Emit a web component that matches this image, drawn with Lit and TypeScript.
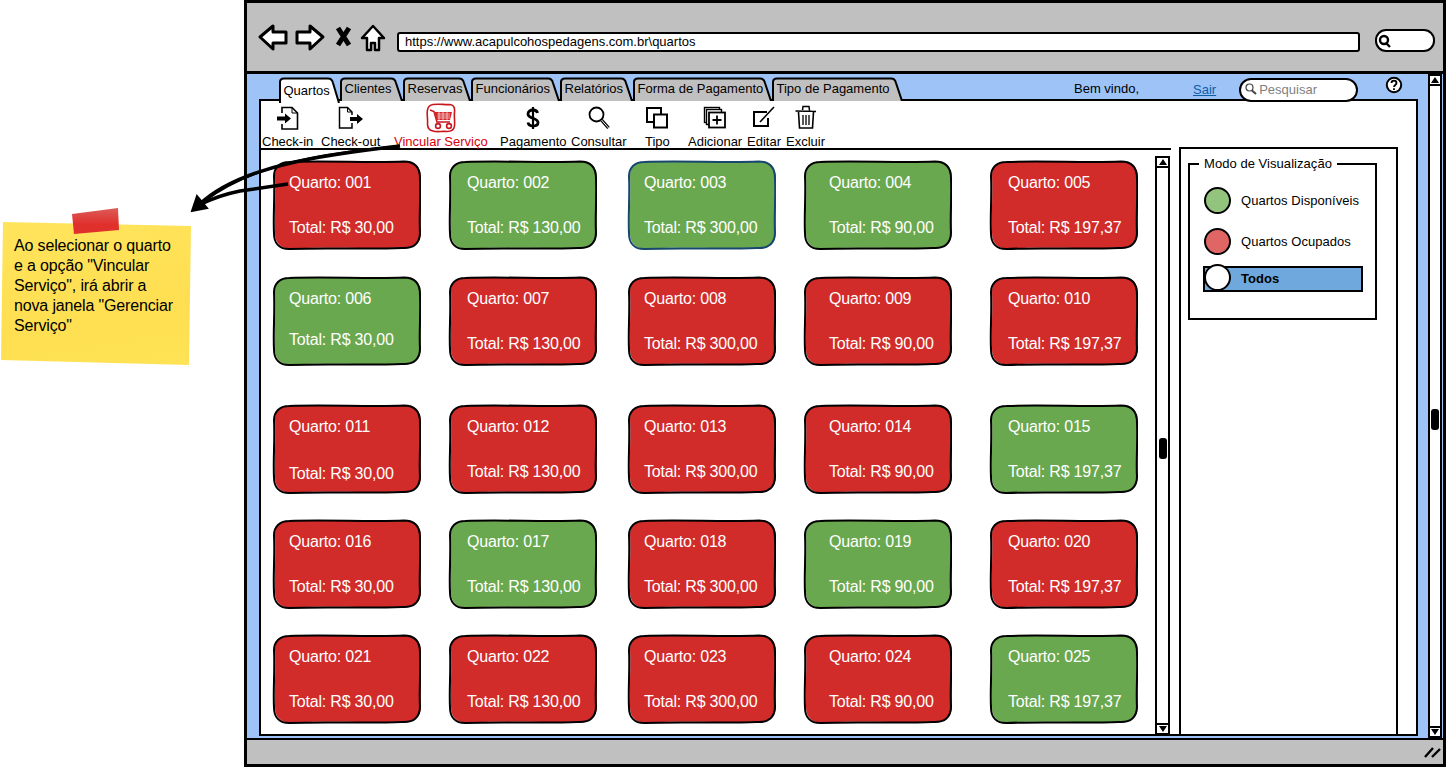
import {LitElement, css, html, svg} from 'lit'
import {customElement} from 'lit/decorators.js'

const URL_TEXT = 'https://www.acapulcohospedagens.com.br\\quartos'

const TABS = [
    {label: 'Quartos', width: 61, active: true},
    {label: 'Clientes', width: 63},
    {label: 'Reservas', width: 68},
    {label: 'Funcionários', width: 89},
    {label: 'Relatórios', width: 73},
    {label: 'Forma de Pagamento', width: 139},
    {label: 'Tipo de Pagamento', width: 131},
]

// sketchy outline of a room card, in a 147x88 box
const CARD_PATH = 'M17 2 C50 0.5 100 3 130 1.5 C141 1.5 146 8 146 18 C147 35 145 55 146 71 C146 81 140 87 128 86 C95 87.5 50 85.5 17 87 C7 87 2 81 2 72 C1 55 3 35 2 16 C2 7 8 2 17 2 Z'

const COLUMNS = [{pad: 16}, {pad: 18}, {pad: 16}, {pad: 25}, {pad: 18}]
const GREEN = [2, 3, 4, 6, 15, 17, 19, 25]
const TOTALS = [30, 130, 300, 90, 197.37]

const formatTotal = (v: number) => 'Total: R$ ' + v.toFixed(2).replace('.', ',')

const ROOMS = Array.from({length: 25}, (_, i) => {
    const n = i + 1
    let shift = 0
    if (n === 6) shift = -4
    if (n === 11) shift = 2
    return {
        n,
        label: 'Quarto: ' + String(n).padStart(3, '0'),
        total: formatTotal(TOTALS[i % 5]),
        green: GREEN.includes(n),
        selected: n === 3,
        pad: COLUMNS[i % 5].pad,
        gap: 27 + shift,
    }
})

const icon = (w: number, h: number, body: unknown) => html`
    <svg width="${w}" height="${h}" viewBox="0 0 ${w} ${h}">${body}</svg>
`

const TOOLS = [
    {label: 'Check-in', icon: icon(24, 24, svg`
        <path d="M6 7 V1.500 H16 L21.500 7 V23 H6 V18" fill="#fff" stroke="#000" stroke-width="1.600"/>
        <path d="M16 1.500 V7 H21.500" fill="none" stroke="#000" stroke-width="1"/>
        <path d="M1 10.500 H9 V7.500 L15 12.500 L9 17.500 V14.500 H1 Z" fill="#000"/>`)},
    {label: 'Check-out', icon: icon(28, 24, svg`
        <path d="M15 9 V6 L10.500 1.500 H2.500 V22 H15 V17" fill="#fff" stroke="#000" stroke-width="1.500"/>
        <path d="M10.500 1.500 V6 H15" fill="none" stroke="#000" stroke-width="1"/>
        <path d="M13 11 H20 V8 L26 13 L20 18 V15 H13 Z" fill="#000"/>`)},
    {label: 'Vincular Serviço', red: true, icon: icon(30, 30, svg`
        <path d="M7 1.500 C13 .5 19 2 24 1.500 C28 2 29 5 28.500 9 C28 14 29 19 28.500 23 C28 27 25 28.500 21 28.500 C15 28 11 29.500 7 28 C3 27.500 1.500 25 1.500 21 C2 15 .5 11 1.500 7 C2 3.500 4 2 7 1.500 Z" fill="#fff" stroke="#c8171c" stroke-width="1.600"/>
        <path d="M4 7 L8 8.500 L11 19 H24" fill="none" stroke="#c8171c" stroke-width="1.600"/>
        <path d="M8 9 H26 L24 17 H10 Z" fill="#d6262a"/>
        <path d="M11.500 11 H24 M11.500 13 H24 M11.500 15 H24 M13 9 V17 M17 9 V17 M21 9 V17" stroke="#fff" stroke-width=".6"/>
        <circle cx="12" cy="23" r="2.400" fill="none" stroke="#c8171c" stroke-width="1.600"/>
        <circle cx="23" cy="23" r="2.400" fill="none" stroke="#c8171c" stroke-width="1.600"/>`)},
    {label: 'Pagamento', icon: icon(16, 26, svg`
        <path d="M12.500 8 C12 5.500 10 5 8 5 C5 5 3 6.500 3 9 C3 14 13 12.500 13 17.500 C13 20 11 21 8 21 C5.500 21 3.500 20 3 17.500" fill="none" stroke="#000" stroke-width="2.800"/>
        <path d="M8 2 V24" stroke="#000" stroke-width="2.200"/>`)},
    {label: 'Consultar', icon: icon(24, 26, svg`
        <circle cx="9.500" cy="9.500" r="7" fill="#fff" stroke="#000" stroke-width="1.800"/>
        <path d="M14.500 15 L21.500 23" stroke="#000" stroke-width="3.400"/>
        <path d="M14.500 15 L21.500 23" stroke="#fff" stroke-width="1"/>`)},
    {label: 'Tipo', icon: icon(24, 24, svg`
        <rect x="2" y="2" width="14" height="14" fill="#fff" stroke="#000" stroke-width="2"/>
        <rect x="9" y="8.500" width="13" height="13" fill="#fff" stroke="#000" stroke-width="2"/>`)},
    {label: 'Adicionar', icon: icon(24, 24, svg`
        <rect x="1.500" y="1.500" width="15" height="15" fill="#fff" stroke="#000" stroke-width="1.400"/>
        <rect x="3.500" y="3.500" width="15" height="15" fill="#fff" stroke="#000" stroke-width="1.400"/>
        <rect x="6" y="6.500" width="16" height="15" fill="#fff" stroke="#000" stroke-width="1.800"/>
        <path d="M14 9.500 V18.500 M9.500 14 H18.500" stroke="#000" stroke-width="1.800"/>`)},
    {label: 'Editar', icon: icon(24, 24, svg`
        <path d="M15 6 H2 V20 H16 V12" fill="none" stroke="#000" stroke-width="2"/>
        <path d="M8 16 L22 1" stroke="#000" stroke-width="1.600"/>`)},
    {label: 'Excluir', icon: icon(24, 26, svg`
        <path d="M1.500 6 L22 6.500 M8.500 5 L9 1.500 H15 L15.500 5.500" fill="none" stroke="#000" stroke-width="1.500"/>
        <path d="M4.500 7 L5.500 23 H18.500 L19.500 7" fill="#fff" stroke="#000" stroke-width="1.600"/>
        <path d="M9 10 V20 M12 10 V20 M15 10 V20" stroke="#000" stroke-width="1.300"/>`)},
]

@customElement('app-root')
export class App_Root extends LitElement
{
    renderTab(tab: {label: string, width: number, active?: boolean})
    {
        const w = tab.width
        const h = tab.active ? 26 : 24
        return html`
            <div class="tab ${tab.active ? 'active' : ''}" style="width: ${w}px">
                <svg class="tab-shape" width="${w}" height="${h}">
                    <path
                        d="M1 ${h} V5 Q1 1.500 5 1.500 H${w - 12} Q${w - 8} 1.500 ${w - 7} 6 L${w - 1} ${h}"
                        fill="${tab.active ? '#fff' : '#c0c0c0'}"
                        stroke="#000"
                        stroke-width="2"
                    />
                </svg>
                <span>${tab.label}</span>
            </div>
        `
    }

    renderScroll(kind: string)
    {
        return html`
            <div class="scroll ${kind}">
                <div class="scroll-btn"><i class="up"></i></div>
                <div class="track"><b></b></div>
                <div class="scroll-btn"><i class="down"></i></div>
            </div>
        `
    }

    renderCard(room: typeof ROOMS[number])
    {
        const fill = room.green ? '#6aa84f' : '#d12b2a'
        const line = room.selected ? '#17466e' : '#000'
        return html`
            <div class="card" style="padding-left: ${room.pad}px">
                <svg class="card-shape" width="149" height="90" viewBox="0 0 147 88" preserveAspectRatio="none">
                    <path d="${CARD_PATH}" fill="${fill}" transform="translate(1 -.5)"/>
                    <path d="${CARD_PATH}" fill="none" stroke="${line}" stroke-width="2"/>
                </svg>
                <span class="card-text">${room.label}</span>
                <span class="card-text" style="margin-top: ${room.gap}px">${room.total}</span>
            </div>
        `
    }

    render()
    {
        return html`
            <div class="page">
                <main class="window">
                    <header class="browser-bar">
                        <svg class="nav" width="135" height="32" viewBox="0 0 135 32">
                            <path d="M2 14 L15 3 V9 H28 V20 H15 V26 Z" fill="#fff" stroke="#000" stroke-width="3" stroke-linejoin="round"/>
                            <path d="M65 14 L52 3 V9 H39 V20 H52 V26 Z" fill="#fff" stroke="#000" stroke-width="3" stroke-linejoin="round"/>
                            <path d="M80 5 L91 22 M91 5 L80 22" stroke="#000" stroke-width="5"/>
                            <path d="M104 15 L115 3 L126 15 H121 V27 H117 V20 H113 V27 H109 V15 Z" fill="#fff" stroke="#000" stroke-width="2.500" stroke-linejoin="round"/>
                        </svg>
                        <div class="url">${URL_TEXT}</div>
                        <div class="browser-search">
                            <svg width="14" height="14" viewBox="0 0 14 14">
                                <circle cx="6" cy="6" r="4" fill="#fff" stroke="#000" stroke-width="2.400"/>
                                <path d="M8 9 L12 13" stroke="#000" stroke-width="2.400"/>
                            </svg>
                        </div>
                    </header>
                    <div class="content">
                        <div class="main">
                            <div class="top-row">
                                <nav class="tabs">${TABS.map((t) => this.renderTab(t))}</nav>
                                <span class="welcome">Bem vindo,</span>
                                <a class="logout">Sair</a>
                                <div class="search">
                                    <svg width="12" height="12" viewBox="0 0 12 12">
                                        <circle cx="4.500" cy="4.500" r="3.500" fill="#fff" stroke="#444" stroke-width="1.200"/>
                                        <path d="M7 7.500 L11 11" stroke="#444" stroke-width="2"/>
                                    </svg>
                                    <span>Pesquisar</span>
                                </div>
                                <svg class="help" width="18" height="18" viewBox="0 0 18 18">
                                    <circle cx="9" cy="9" r="7.200" fill="#fff" stroke="#000" stroke-width="2"/>
                                    <path d="M6.500 7 C6.500 3.800 11.500 3.800 11.500 7 C11.500 9 9 9 9 11" fill="none" stroke="#000" stroke-width="1.800"/>
                                    <path d="M9 12.300 V14" stroke="#000" stroke-width="1.800"/>
                                </svg>
                            </div>
                            <section class="panel">
                                <div class="left">
                                    <div class="tools">
                                        ${TOOLS.map((t) => html`
                                            <div class="tool ${t.red ? 'red' : ''}">
                                                <div class="tool-icon">${t.icon}</div>
                                                <span>${t.label}</span>
                                            </div>
                                        `)}
                                    </div>
                                    <div class="body">
                                        <div class="cards">
                                            ${ROOMS.map((r) => this.renderCard(r))}
                                        </div>
                                        ${this.renderScroll('inner')}
                                    </div>
                                </div>
                                <aside class="side">
                                    <fieldset class="legend-box">
                                        <legend>Modo de Visualização</legend>
                                        <div class="mode">
                                            <i class="dot green"></i><span>Quartos Disponíveis</span>
                                        </div>
                                        <div class="mode">
                                            <i class="dot red"></i><span>Quartos Ocupados</span>
                                        </div>
                                        <div class="mode on">
                                            <i class="dot white"></i><span>Todos</span>
                                        </div>
                                    </fieldset>
                                </aside>
                            </section>
                        </div>
                        ${this.renderScroll('outer')}
                    </div>
                    <footer class="status">
                        <svg width="18" height="14" viewBox="0 0 18 14">
                            <path d="M1 12 L9 3 M8 12 L16 4" stroke="#000" stroke-width="2.400"/>
                        </svg>
                    </footer>
                </main>
            </div>

            <aside class="note">
                Ao selecionar o quarto<br>
                e a opção "Vincular<br>
                Serviço", irá abrir a<br>
                nova janela "Gerenciar<br>
                Serviço"
            </aside>
            <div class="tape"></div>
            <svg class="arrows" width="1447" height="768">
                <path d="M400 146 C330 154 240 165 199 205 C215 197 225 194 240 191 L288 184" fill="none" stroke="#000" stroke-width="3.500"/>
                <path d="M400 146 C330 152 255 163 205 201" fill="none" stroke="#000" stroke-width="2"/>
                <path d="M197 196 L192 211 L207 208 Z" fill="#000" stroke="#000" stroke-width="2"/>
            </svg>
        `
    }

    static styles = css`
        :host
        {
            display: block;
            position: relative;
            width: 1447px;
            height: 768px;
            overflow: hidden;
            background: #fff;
            font-family: "Liberation Sans", Arial, sans-serif;
            color: #000;
        }

        *
        {
            box-sizing: border-box;
        }

        svg
        {
            display: block;
        }

        .page
        {
            padding-left: 244px;
        }

        .window
        {
            width: 1202px;
            height: 767px;
            border: 3px solid #000;
            display: flex;
            flex-direction: column;
            background: #c0c0c0;
        }

        .browser-bar
        {
            height: 71px;
            flex: none;
            border-bottom: 3px solid #000;
            display: flex;
            align-items: flex-start;
            padding: 20px 0 0 11px;
        }

        .nav
        {
            flex: none;
        }

        .url
        {
            width: 963px;
            height: 20px;
            margin: 9px 0 0 4px;
            padding-left: 6px;
            background: #fff;
            border: 2px solid #000;
            border-radius: 3px;
            font-size: 13px;
            line-height: 15px;
            white-space: nowrap;
        }

        .browser-search
        {
            width: 60px;
            height: 23px;
            margin: 6px 0 0 15px;
            background: #fff;
            border: 2px solid #000;
            border-radius: 11px;
            padding: 3px 0 0 1px;
        }

        .content
        {
            flex: 1;
            min-height: 0;
            display: flex;
            background: #9dc3f7;
        }

        .main
        {
            width: 1171px;
            display: flex;
            flex-direction: column;
            padding: 3px 0 0 12px;
            flex: none;
        }

        .top-row
        {
            height: 24px;
            flex: none;
            display: flex;
            position: relative;
            z-index: 1;
            font-size: 13px;
        }

        .tabs
        {
            display: flex;
            margin-left: 20px;
        }

        .tab
        {
            position: relative;
            height: 24px;
            padding: 4px 0 0 4.500px;
            white-space: nowrap;
        }

        .tab span
        {
            position: relative;
        }

        .tab.active
        {
            padding-top: 6px;
        }

        .tab-shape
        {
            position: absolute;
            left: 0;
            top: 0;
        }

        .welcome
        {
            margin: 4px 0 0 171px;
        }

        .logout
        {
            margin: 5px 0 0 54px;
            color: #0b5ea8;
            text-decoration: underline;
        }

        .search
        {
            width: 119px;
            height: 24px;
            margin: 1px 0 0 23px;
            padding: 0 0 2px 4px;
            background: #fff;
            border: 2px solid #000;
            border-radius: 12px;
            display: flex;
            align-items: center;
            gap: 2px;
            color: #7f7f7f;
        }

        .help
        {
            margin: -1px 0 0 27px;
        }

        .panel
        {
            flex: 1;
            min-height: 0;
            margin: -2px 0 2px;
            background: #fff;
            border: 2px solid #000;
            display: flex;
        }

        .left
        {
            width: 910px;
            flex: none;
            display: flex;
            flex-direction: column;
        }

        .tools
        {
            height: 49px;
            flex: none;
            border-bottom: 2px solid #000;
            display: grid;
            grid-template-columns: 59px 73px 106px 71px 74px 43px 59px 39px 41px;
            padding-left: 1px;
        }

        .tool
        {
            justify-self: start;
            display: flex;
            flex-direction: column;
            align-items: center;
            font-size: 13px;
            line-height: 15px;
            white-space: nowrap;
        }

        .tool.red
        {
            color: #d8000c;
        }

        .tool-icon
        {
            height: 33px;
            display: flex;
            align-items: center;
        }

        .body
        {
            flex: 1;
            min-height: 0;
            display: flex;
        }

        .cards
        {
            width: 894px;
            flex: none;
            padding: 11px 0 0 12px;
            display: grid;
            grid-template-columns: 176px 179px 176px 186px 147px;
            grid-template-rows: 116px 128px 115px 115px 88px;
        }

        .card
        {
            position: relative;
            width: 147px;
            height: 88px;
            padding-top: 13px;
            display: flex;
            flex-direction: column;
            align-items: flex-start;
            color: #fff;
        }

        .card-shape
        {
            position: absolute;
            left: -1px;
            top: -1px;
        }

        .card-text
        {
            position: relative;
            font-size: 16px;
            letter-spacing: -.2px;
            line-height: 18px;
            white-space: nowrap;
        }

        .scroll
        {
            width: 15px;
            flex: none;
            background: #fff;
            border: 2px solid #000;
            border-width: 0 2px;
            display: flex;
            flex-direction: column;
        }

        .scroll.inner
        {
            margin-top: 6px;
            margin-bottom: -1px;
        }

        .scroll.inner .track
        {
            padding-top: 5px;
        }

        .scroll.outer
        {
            margin-left: 10px;
            width: 14px;
        }

        .scroll-btn
        {
            height: 12px;
            flex: none;
            border: 1px solid #000;
            border-width: 2px 0;
            display: flex;
            align-items: center;
            justify-content: center;
        }

        .scroll-btn i
        {
            width: 0;
            height: 0;
            border: 4px solid transparent;
        }

        .scroll-btn .up
        {
            border-top: 0;
            border-bottom: 6px solid #000;
        }

        .scroll-btn .down
        {
            border-bottom: 0;
            border-top: 6px solid #000;
        }

        .track
        {
            flex: 1;
            display: flex;
            align-items: center;
            justify-content: center;
        }

        .scroll.outer .track
        {
            padding-top: 26px;
        }

        .track b
        {
            width: 8px;
            height: 21px;
            border-radius: 3px;
            background: #000;
        }

        .side
        {
            width: 219px;
            margin: 46px 0 0 8px;
            flex: none;
            border: 2px solid #000;
            border-bottom-width: 0;
            padding: 8px 0 0 7px;
        }

        .legend-box
        {
            width: 189px;
            height: 163px;
            margin: 0;
            padding: 16px 0 0 14px;
            border: 2.500px solid #000;
            font-size: 13px;
            letter-spacing: .05px;
        }

        legend
        {
            margin-left: -5px;
            padding: 0 5px;
            line-height: 14px;
        }

        .mode
        {
            height: 27px;
            margin-bottom: 14px;
            display: flex;
            align-items: center;
            gap: 10px;
        }

        .mode.on
        {
            width: 160px;
            height: 26px;
            margin: -3px 0 0 -1px;
            padding-bottom: 1px;
            background: #6fa8dc;
            border: 2px solid #000;
            font-weight: bold;
            overflow: visible;
        }

        .dot
        {
            width: 27px;
            height: 27px;
            flex: none;
            border: 2px solid #000;
            border-radius: 50%;
        }

        .dot.green
        {
            background: #93c47d;
        }

        .dot.red
        {
            background: #e06666;
        }

        .dot.white
        {
            background: #fff;
            margin-left: -1px;
            margin-top: -3px;
        }

        .status
        {
            height: 26px;
            flex: none;
            border-top: 2px solid #000;
            display: flex;
            justify-content: flex-end;
            align-items: center;
            padding-right: 1px;
        }

        .note
        {
            position: absolute;
            left: 1px;
            top: 222px;
            width: 190px;
            height: 143px;
            padding: 14px 0 0 13px;
            background: linear-gradient(170deg, #ffe45c 0%, #ffdf52 60%, #ffe255 100%);
            clip-path: polygon(2px 0, 190px 4px, 188px 143px, 0 138px);
            font-size: 16px;
            letter-spacing: -.15px;
            line-height: 20px;
        }

        .tape
        {
            position: absolute;
            left: 72px;
            top: 208px;
            width: 48px;
            height: 27px;
            background: linear-gradient(#dc5c58, #e0302c 60%);
            clip-path: polygon(0 6px, 46px 0, 47px 22px, 2px 26px);
        }

        .arrows
        {
            position: absolute;
            left: 0;
            top: 0;
            pointer-events: none;
        }
    `
}

declare global
{
    interface HTMLElementTagNameMap
    {
        'app-root': App_Root
    }
}
